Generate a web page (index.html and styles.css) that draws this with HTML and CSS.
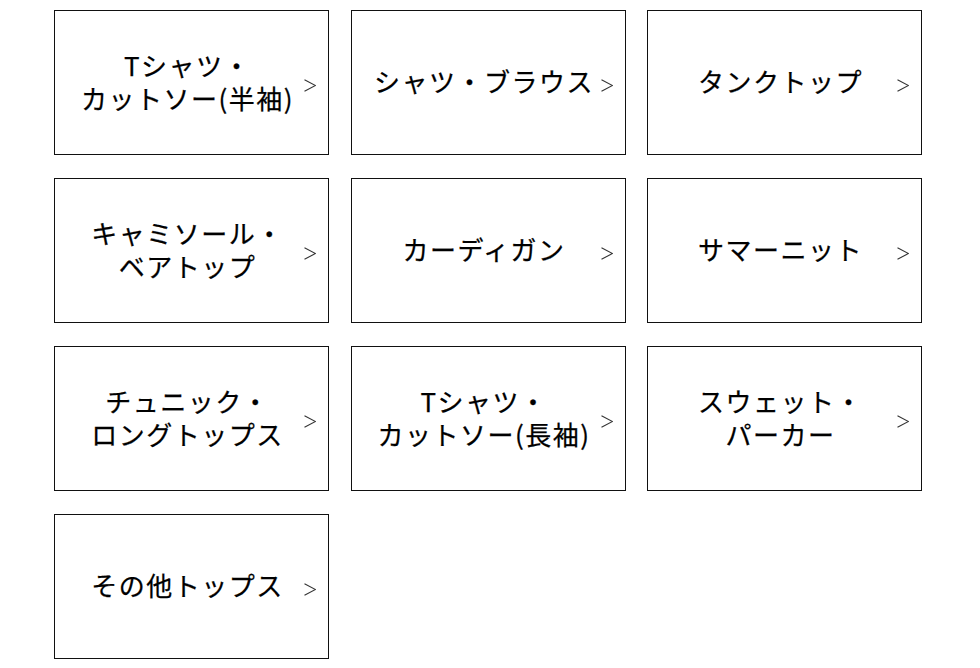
FILE: index.html
```html
<!DOCTYPE html>
<html lang="ja">
<head>
<meta charset="utf-8">
<title>トップス</title>
<link rel="stylesheet" href="styles.css">
</head>
<body>
<div class="grid">
  <a class="item" href="#"><span class="label">Tシャツ・<br>カットソー(半袖)</span><svg class="chev" viewBox="0 0 12 13"><polyline points="0.5,0.8 11.5,6.5 0.5,12.2"/></svg></a>
  <a class="item" href="#"><span class="label">シャツ・ブラウス</span><svg class="chev" viewBox="0 0 12 13"><polyline points="0.5,0.8 11.5,6.5 0.5,12.2"/></svg></a>
  <a class="item" href="#"><span class="label">タンクトップ</span><svg class="chev" viewBox="0 0 12 13"><polyline points="0.5,0.8 11.5,6.5 0.5,12.2"/></svg></a>
  <a class="item" href="#"><span class="label">キャミソール・<br>ベアトップ</span><svg class="chev" viewBox="0 0 12 13"><polyline points="0.5,0.8 11.5,6.5 0.5,12.2"/></svg></a>
  <a class="item" href="#"><span class="label">カーディガン</span><svg class="chev" viewBox="0 0 12 13"><polyline points="0.5,0.8 11.5,6.5 0.5,12.2"/></svg></a>
  <a class="item" href="#"><span class="label">サマーニット</span><svg class="chev" viewBox="0 0 12 13"><polyline points="0.5,0.8 11.5,6.5 0.5,12.2"/></svg></a>
  <a class="item" href="#"><span class="label">チュニック・<br>ロングトップス</span><svg class="chev" viewBox="0 0 12 13"><polyline points="0.5,0.8 11.5,6.5 0.5,12.2"/></svg></a>
  <a class="item" href="#"><span class="label">Tシャツ・<br>カットソー(長袖)</span><svg class="chev" viewBox="0 0 12 13"><polyline points="0.5,0.8 11.5,6.5 0.5,12.2"/></svg></a>
  <a class="item" href="#"><span class="label">スウェット・<br>パーカー</span><svg class="chev" viewBox="0 0 12 13"><polyline points="0.5,0.8 11.5,6.5 0.5,12.2"/></svg></a>
  <a class="item" href="#"><span class="label">その他トップス</span><svg class="chev" viewBox="0 0 12 13"><polyline points="0.5,0.8 11.5,6.5 0.5,12.2"/></svg></a>
</div>
</body>
</html>
```

FILE: styles.css
```css
html, body {
  margin: 0;
  padding: 0;
  background: #fff;
}

.grid {
  display: grid;
  grid-template-columns: repeat(3, 275px);
  column-gap: 21.5px;
  row-gap: 23px;
  padding: 10px 0 0 54px;
}

.item {
  box-sizing: border-box;
  height: 145px;
  border: 1px solid #111;
  display: flex;
  align-items: center;
  padding: 0 12px 0 20px;
  text-decoration: none;
  color: #000;
}

.label {
  flex: 1;
  text-align: center;
  font-family: "Noto Sans CJK JP", "Noto Sans", sans-serif;
  font-weight: 400;
  font-size: 26px;
  line-height: 33px;
  letter-spacing: 1.5px;
  white-space: nowrap;
  padding-bottom: 4px;
  -webkit-text-stroke: 0.25px #000;
}

.chev {
  flex: none;
  width: 12px;
  height: 13px;
  margin-left: 4px;
  margin-top: 5px;
  fill: none;
  stroke: #333;
  stroke-width: 1.1;
}
```
